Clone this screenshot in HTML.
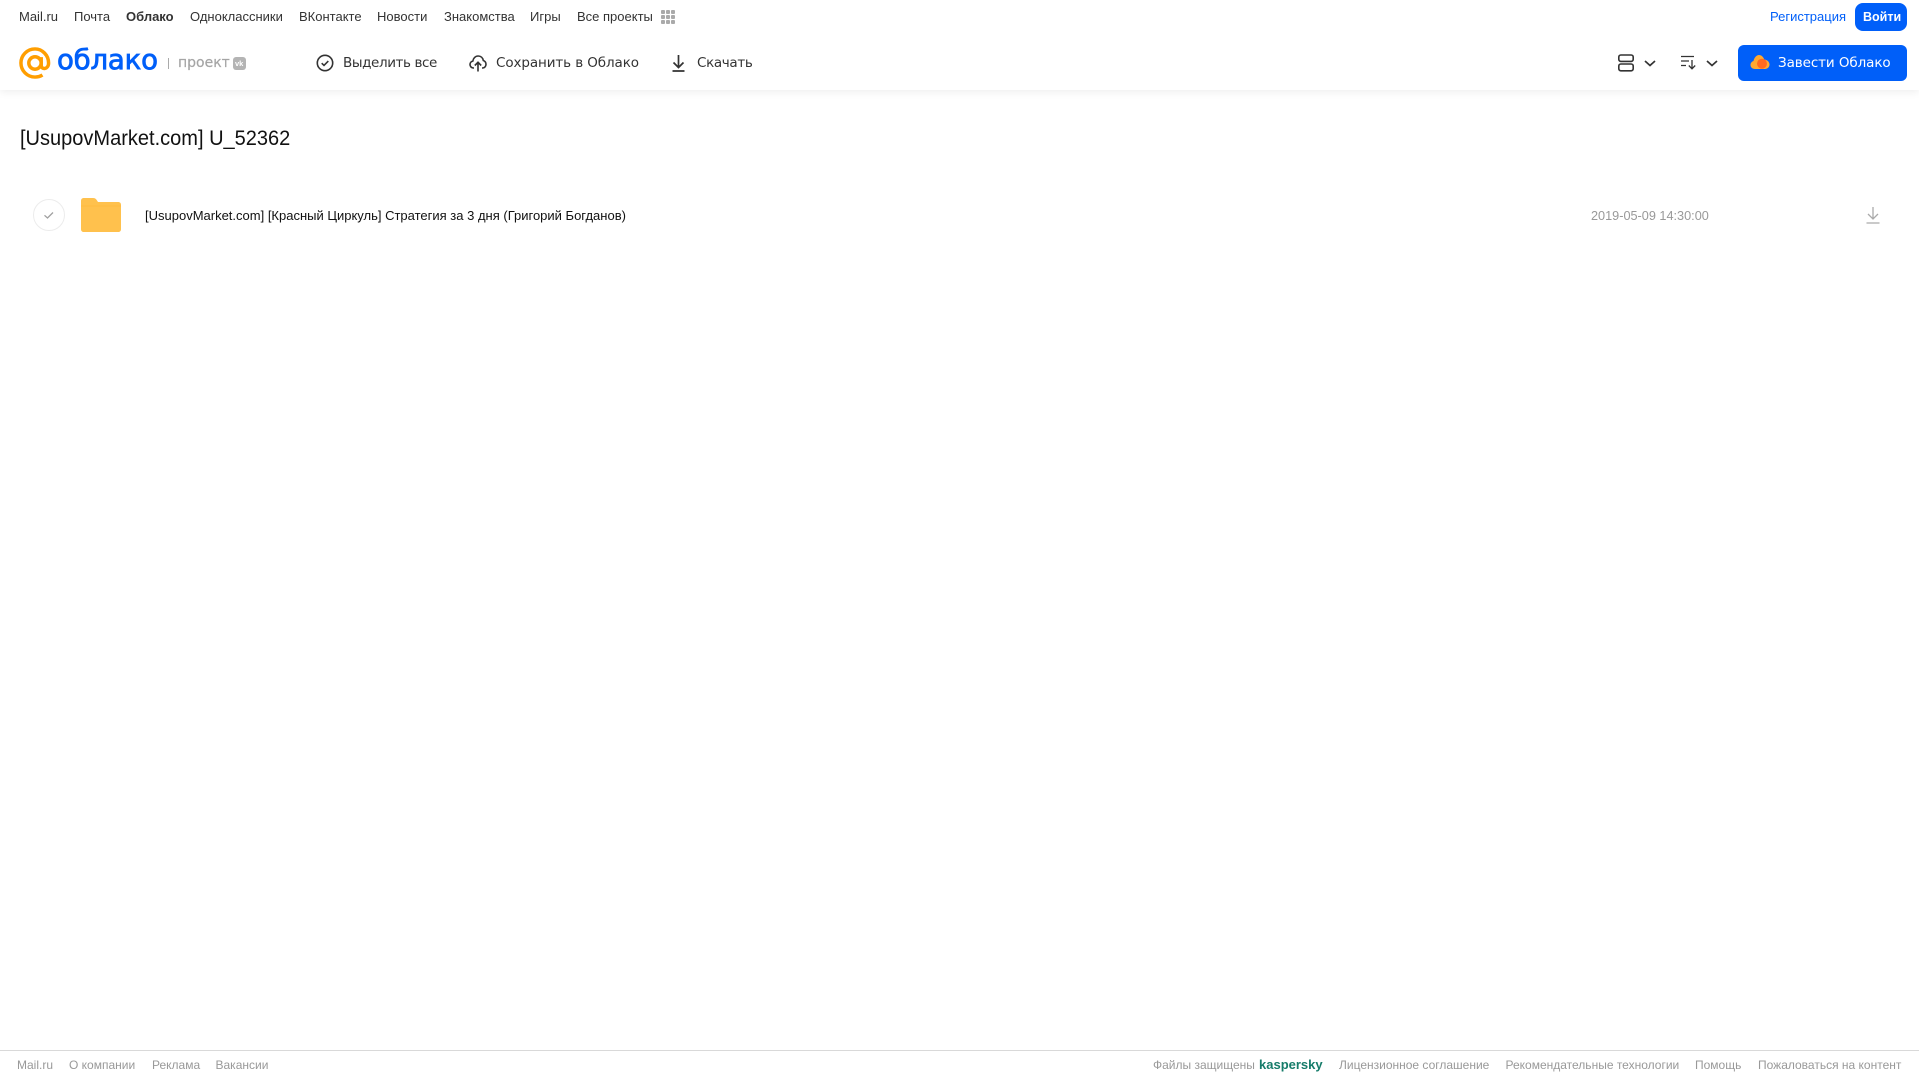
<!DOCTYPE html>
<html lang="ru"><head><meta charset="utf-8"><title>Облако</title>
<style>
html,body{margin:0;padding:0;background:#fff;width:1919px;height:1079px;overflow:hidden}
body{position:relative;font-family:"Liberation Sans",sans-serif}
.t{position:absolute;white-space:nowrap;line-height:1}
.n{top:10px;font-size:13px;color:#333}
.b{top:57px;color:#333;font-family:"DejaVu Sans",sans-serif;font-size:13.5px}
.f{top:1059px;font-size:12px;color:#999}
svg{position:absolute;overflow:visible}
</style></head><body>
<div style="position:absolute;left:0;top:0;width:1919px;height:90px;background:#fff;box-shadow:0 2px 8px rgba(0,0,0,.07)"></div>

<span class="t n" style="left:19px">Mail.ru</span>
<span class="t n" style="left:74px">Почта</span>
<span class="t n" style="left:126px;font-weight:700">Облако</span>
<span class="t n" style="left:190px">Одноклассники</span>
<span class="t n" style="left:299px">ВКонтакте</span>
<span class="t n" style="left:377px">Новости</span>
<span class="t n" style="left:444px">Знакомства</span>
<span class="t n" style="left:530px">Игры</span>
<span class="t n" style="left:577px">Все проекты</span>
<svg style="left:661px;top:10px" width="14" height="14" fill="#aaa"><rect width="4" height="4" rx="1"/><rect x="5" width="4" height="4" rx="1"/><rect x="10" width="4" height="4" rx="1"/><rect y="5" width="4" height="4" rx="1"/><rect x="5" y="5" width="4" height="4" rx="1"/><rect x="10" y="5" width="4" height="4" rx="1"/><rect y="10" width="4" height="4" rx="1"/><rect x="5" y="10" width="4" height="4" rx="1"/><rect x="10" y="10" width="4" height="4" rx="1"/></svg>

<span class="t n" style="left:1770px;color:#005ff9">Регистрация</span>
<div style="position:absolute;left:1855px;top:3px;width:52px;height:28px;border-radius:8px;background:#005ff9"></div>
<span class="t n" style="left:1863px;color:#fff;font-weight:700;font-size:12.5px;top:11px">Войти</span>

<svg style="left:19px;top:47px" width="32" height="32" viewBox="0 0 33 33" fill="none" stroke="#ff9e00" stroke-width="3.6"><circle cx="16.5" cy="16.5" r="6.4"/><path d="M22.9 10.5v8.2c0 5.2 7.6 4.7 7.6-2.2C30.500 8.700 24.200 2 16.500 2 8.500 2 2 8.500 2 16.500S8.500 31 16.500 31c3 0 5.500-.7 7.700-2.100"/></svg>
<span class="t" style="left:57px;top:46px;font-family:'DejaVu Sans',sans-serif;font-size:27.6px;color:#005ff9;font-weight:400;-webkit-text-stroke:.8px #005ff9;letter-spacing:-.2px">облако</span>
<div style="position:absolute;left:168px;top:58px;width:1px;height:11px;background:#aaa"></div>
<span class="t" style="left:178px;top:56px;font-family:'DejaVu Sans',sans-serif;font-size:14px;color:#a5a5a5;-webkit-text-stroke:.2px #a5a5a5">проект</span>
<div style="position:absolute;left:233px;top:57px;width:13px;height:13px;border-radius:3px;background:#b4b4b4"></div>
<span class="t" style="left:235px;top:60px;font-size:7.5px;font-weight:700;color:#fff">vk</span>

<svg style="left:316px;top:54px" width="18" height="18" viewBox="0 0 18 18" fill="none" stroke="#333" stroke-width="1.6"><circle cx="9" cy="9" r="7.700"/><path d="M5.700 9.200l2.300 2.200 4.300-4.300"/></svg>
<span class="t b" style="left:343px;letter-spacing:-.4px">Выделить все</span>
<svg style="left:469px;top:55px" width="18" height="17" viewBox="0 0 18 17" fill="none" stroke="#333" stroke-width="1.600"><path d="M5 13H4.500C2.500 13 1 11.500 1 9.500 1 7.800 2.200 6.400 3.800 6.100 4.300 3.200 6.400 1 9.200 1c2.600 0 4.600 1.900 5.100 4.500C16 6.100 17 7.600 17 9.300 17 11.300 15.500 13 13.500 13H13"/><path d="M9 16.500V7.500M5.800 10.500L9 7.300l3.200 3.200"/></svg>
<span class="t b" style="left:496px;letter-spacing:-.1px">Сохранить в Облако</span>
<svg style="left:671px;top:54px" width="15" height="18" viewBox="0 0 15 18" fill="none" stroke="#333" stroke-width="1.700"><path d="M7.500 1v12M2.500 8.500l5 5 5-5M1.500 17h12"/></svg>
<span class="t b" style="left:697px;letter-spacing:-.35px">Скачать</span>

<svg style="left:1618px;top:54px" width="16" height="18" viewBox="0 0 16 18" fill="none" stroke="#333" stroke-width="1.600"><rect x=".8" y="1" width="14.400" height="6.400" rx="2"/><rect x=".8" y="10" width="14.400" height="6.800" rx="2"/></svg>
<svg style="left:1644px;top:60px" width="12" height="7" fill="none" stroke="#333" stroke-width="1.700"><path d="M1 1l5 4.500L11 1"/></svg>
<svg style="left:1680px;top:55px" width="17" height="15" viewBox="0 0 17 15" fill="none" stroke="#333" stroke-width="1.300"><path d="M1 1.500h13M1 6h8M1 10.500h5M12 5v9M8.800 10.500l3.200 3.300 3.200-3.300"/></svg>
<svg style="left:1706px;top:60px" width="12" height="7" fill="none" stroke="#333" stroke-width="1.700"><path d="M1 1l5 4.500L11 1"/></svg>

<div style="position:absolute;left:1738px;top:45px;width:169px;height:36px;border-radius:6px;background:#005ff9"></div>
<svg style="left:1750px;top:54px" width="20" height="17" viewBox="0 0 20 17"><path d="M5 15C2 15 .5 13 .5 11c0-2 1.300-3.500 3-4C4.200 3.500 6.500 1 9 1c2.500 0 4.500 2 5.200 4.500 2.800.2 5.300 2.300 5.300 5 0 2.500-2 4.500-4.700 4.500z" fill="#ffa930"/><circle cx="12" cy="9.700" r="5" fill="#ff6a1f"/></svg>
<span class="t b" style="left:1778px;color:#fff;letter-spacing:-.09px">Завести Облако</span>

<span class="t" style="left:20px;top:128px;font-size:21px;color:#111;transform:scaleX(.953);transform-origin:0 0">[UsupovMarket.com] U_52362</span>

<svg style="left:33px;top:199px" width="32" height="32" viewBox="0 0 32 32" fill="none"><circle cx="16" cy="16" r="15.500" stroke="#ececec"/><path d="M11.500 16.300l3 2.700 5.500-5.500" stroke="#a0a0a0" stroke-width="1.300"/></svg>
<svg style="left:81px;top:198px" width="40" height="34" viewBox="0 0 40 34"><path d="M0 3C0 1 1 0 3 0h9c2 0 3 .8 4 2.500L17 4h20c2 0 3 1 3 3v24c0 2-1 3-3 3H3c-2 0-3-1-3-3z" fill="#ffc14d"/><path d="M0 8h40" stroke="#ffb433" stroke-width=".6"/></svg>
<span class="t" style="left:145px;top:209px;font-size:13px;color:#111">[UsupovMarket.com] [Красный Циркуль] Стратегия за 3 дня (Григорий Богданов)</span>
<span class="t" style="left:1591px;top:210px;font-size:12.7px;color:#999">2019-05-09 14:30:00</span>
<svg style="left:1866px;top:207px" width="14" height="17" viewBox="0 0 14 17" fill="none" stroke="#aaa" stroke-width="1.300"><path d="M7 0v12M2 7l5 5 5-5M.5 16h13"/></svg>

<div style="position:absolute;left:0;top:1050px;width:1919px;height:1px;background:#d9d9d9"></div>
<span class="t f" style="left:17px">Mail.ru</span>
<span class="t f" style="left:69px">О компании</span>
<span class="t f" style="left:152px">Реклама</span>
<span class="t f" style="left:215.500px">Вакансии</span>
<span class="t f" style="left:1153px">Файлы защищены</span>
<span class="t f" style="left:1259px;color:#167c6a;font-weight:700;font-size:13px;top:1058px">kaspersky</span>
<span class="t f" style="left:1339px">Лицензионное соглашение</span>
<span class="t f" style="left:1505.500px">Рекомендательные технологии</span>
<span class="t f" style="left:1695px">Помощь</span>
<span class="t f" style="left:1758px">Пожаловаться на контент</span>
</body></html>
